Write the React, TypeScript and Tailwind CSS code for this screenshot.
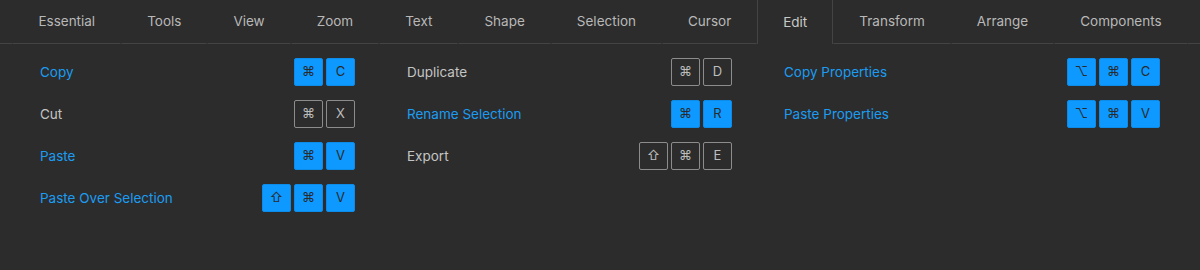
import React from 'react';

type Shortcut = {
  label: string;
  keys: string[];
  active?: boolean;
};

const tabs = ['Essential', 'Tools', 'View', 'Zoom', 'Text', 'Shape', 'Selection', 'Cursor', 'Edit', 'Transform', 'Arrange', 'Components'];

const columns: { width: string; items: Shortcut[] }[] = [
  {
    width: 'w-[315px]',
    items: [
      { label: 'Copy', keys: ['⌘', 'C'], active: true },
      { label: 'Cut', keys: ['⌘', 'X'] },
      { label: 'Paste', keys: ['⌘', 'V'], active: true },
      { label: 'Paste Over Selection', keys: ['⇧', '⌘', 'V'], active: true },
    ],
  },
  {
    width: 'w-[325px]',
    items: [
      { label: 'Duplicate', keys: ['⌘', 'D'] },
      { label: 'Rename Selection', keys: ['⌘', 'R'], active: true },
      { label: 'Export', keys: ['⇧', '⌘', 'E'] },
    ],
  },
  {
    width: 'w-[376px]',
    items: [
      { label: 'Copy Properties', keys: ['⌥', '⌘', 'C'], active: true },
      { label: 'Paste Properties', keys: ['⌥', '⌘', 'V'], active: true },
    ],
  },
];

function Key({ k, active }: { k: string; active?: boolean }) {
  return (
    <div
      className={
        active
          ? 'w-[29px] h-[28px] flex items-center justify-center rounded-[2px] border border-[#0c8ce8] bg-[#0d99ff] text-[#2a2a2a] text-[13px]'
          : 'w-[29px] h-[28px] flex items-center justify-center rounded-[2px] border border-[#8c8c8c] text-[#bdbdbd] text-[13px]'
      }
    >
      {k}
    </div>
  );
}

function Row({ item }: { item: Shortcut }) {
  return (
    <div className="flex items-center justify-between h-[28px]">
      <span className={item.active ? 'text-[13.5px] text-[#1b9cf2]' : 'text-[13.5px] text-[#c4c4c4]'}>{item.label}</span>
      <div className="flex gap-[3px]">
        {item.keys.map((k, i) => (
          <Key key={i} k={k} active={item.active} />
        ))}
      </div>
    </div>
  );
}

export default function App() {
  return (
    <div
      className="w-[1200px] h-[270px] bg-[#2c2c2c]"
      style={{ fontFamily: 'Inter, "DejaVu Sans", sans-serif' }}
    >
      <div className="flex h-[44px]">
        <div className="flex-1 border-b border-[#444444]" />
        {tabs.map((t) => {
          const active = t === 'Edit';
          return (
            <div
              key={t}
              className={
                active
                  ? 'px-[25px] flex items-center border-x border-[#444444] text-[13.5px] text-[#c8c8c8]'
                  : 'px-[25px] flex items-center border-x border-transparent border-b border-b-[#444444] text-[13.5px] text-[#b8b8b8]'
              }
            >
              {t}
            </div>
          );
        })}
        <div className="flex-1 border-b border-[#444444]" />
      </div>
      <div className="flex gap-[52px] pl-[40px] pt-[14px]">
        {columns.map((col, i) => (
          <div key={i} className={`${col.width} flex flex-col gap-[14px]`}>
            {col.items.map((item) => (
              <Row key={item.label} item={item} />
            ))}
          </div>
        ))}
      </div>
    </div>
  );
}
